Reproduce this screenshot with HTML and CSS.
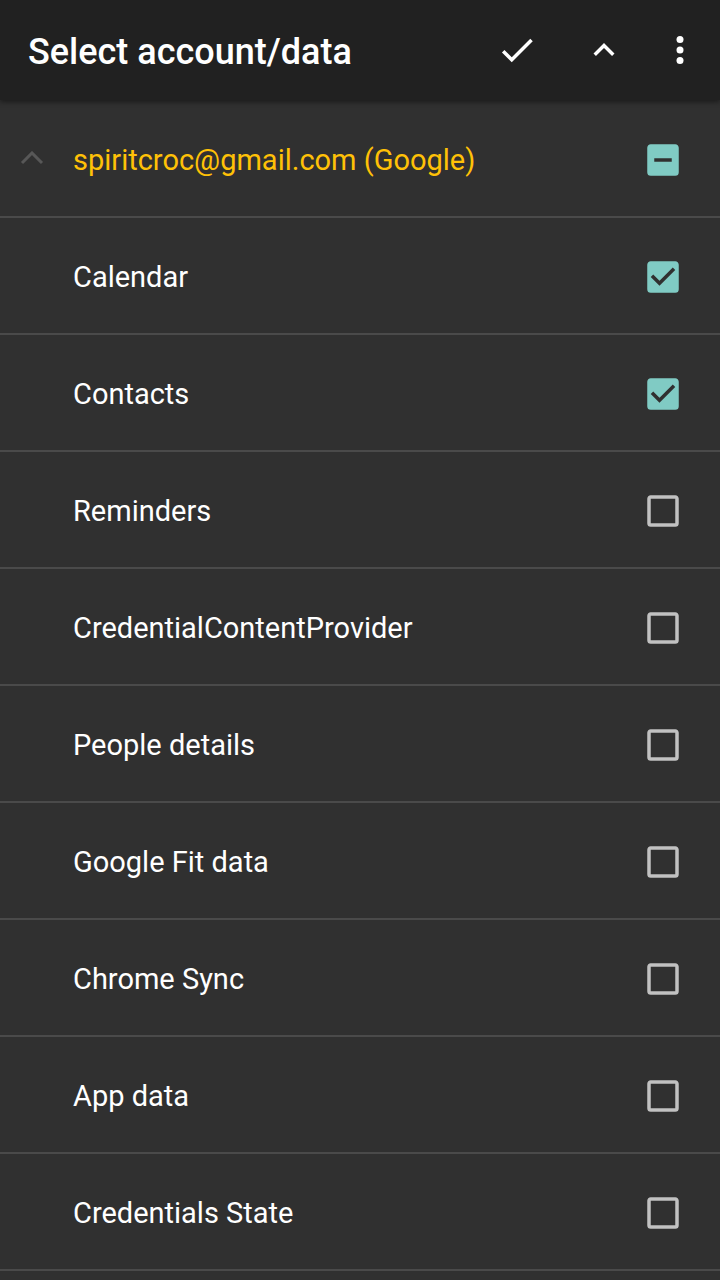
FILE: index.html
```html
<!DOCTYPE html>
<html>
<head>
<meta charset="utf-8">
<link rel="stylesheet" href="styles.css">
</head>
<body>
<header class="appbar">
  <h1 class="title">Select account/data</h1>
  <div class="actions">
    <svg class="act act-check" viewBox="0 0 24 24"><path d="M9 16.17L4.83 12l-1.42 1.41L9 19 21 7l-1.41-1.41z"/></svg>
    <svg class="act act-up" viewBox="0 0 24 24"><path d="M12 8l-6 6 1.41 1.41L12 10.83l4.59 4.58L18 14z"/></svg>
    <svg class="act act-more" viewBox="0 0 24 24"><circle cx="12" cy="6" r="2"/><circle cx="12" cy="12" r="2"/><circle cx="12" cy="18" r="2"/></svg>
  </div>
</header>
<main class="list">
  <div class="row header-row">
    <span class="lead"><svg class="chev" viewBox="0 0 24 14"><polyline points="2,12 12,2 22,12"/></svg></span>
    <span class="label account">spiritcroc@gmail.com (Google)</span>
    <svg class="cb cb-on" viewBox="0 0 24 24"><path d="M19,3H5C3.89,3 3,3.89 3,5V19A2,2 0 0,0 5,21H19A2,2 0 0,0 21,19V5C21,3.89 20.1,3 19,3M17,13H7V11H17V13Z"/></svg>
  </div>
  <div class="row"><span class="lead"></span><span class="label">Calendar</span><svg class="cb cb-on" viewBox="0 0 24 24"><path d="M19,3H5C3.89,3 3,3.9 3,5V19A2,2 0 0,0 5,21H19A2,2 0 0,0 21,19V5C21,3.89 20.1,3 19,3M10,17L5,12L6.41,10.58L10,14.17L17.59,6.58L19,8L10,17Z"/></svg></div>
  <div class="row"><span class="lead"></span><span class="label">Contacts</span><svg class="cb cb-on" viewBox="0 0 24 24"><path d="M19,3H5C3.89,3 3,3.9 3,5V19A2,2 0 0,0 5,21H19A2,2 0 0,0 21,19V5C21,3.89 20.1,3 19,3M10,17L5,12L6.41,10.58L10,14.17L17.59,6.58L19,8L10,17Z"/></svg></div>
  <div class="row"><span class="lead"></span><span class="label">Reminders</span><svg class="cb cb-off" viewBox="0 0 24 24"><path d="M19,3H5C3.89,3 3,3.89 3,5V19A2,2 0 0,0 5,21H19A2,2 0 0,0 21,19V5C21,3.89 20.1,3 19,3M19,5V19H5V5H19Z"/></svg></div>
  <div class="row"><span class="lead"></span><span class="label">CredentialContentProvider</span><svg class="cb cb-off" viewBox="0 0 24 24"><path d="M19,3H5C3.89,3 3,3.89 3,5V19A2,2 0 0,0 5,21H19A2,2 0 0,0 21,19V5C21,3.89 20.1,3 19,3M19,5V19H5V5H19Z"/></svg></div>
  <div class="row"><span class="lead"></span><span class="label">People details</span><svg class="cb cb-off" viewBox="0 0 24 24"><path d="M19,3H5C3.89,3 3,3.89 3,5V19A2,2 0 0,0 5,21H19A2,2 0 0,0 21,19V5C21,3.89 20.1,3 19,3M19,5V19H5V5H19Z"/></svg></div>
  <div class="row"><span class="lead"></span><span class="label">Google Fit data</span><svg class="cb cb-off" viewBox="0 0 24 24"><path d="M19,3H5C3.89,3 3,3.89 3,5V19A2,2 0 0,0 5,21H19A2,2 0 0,0 21,19V5C21,3.89 20.1,3 19,3M19,5V19H5V5H19Z"/></svg></div>
  <div class="row"><span class="lead"></span><span class="label">Chrome Sync</span><svg class="cb cb-off" viewBox="0 0 24 24"><path d="M19,3H5C3.89,3 3,3.89 3,5V19A2,2 0 0,0 5,21H19A2,2 0 0,0 21,19V5C21,3.89 20.1,3 19,3M19,5V19H5V5H19Z"/></svg></div>
  <div class="row"><span class="lead"></span><span class="label">App data</span><svg class="cb cb-off" viewBox="0 0 24 24"><path d="M19,3H5C3.89,3 3,3.89 3,5V19A2,2 0 0,0 5,21H19A2,2 0 0,0 21,19V5C21,3.89 20.1,3 19,3M19,5V19H5V5H19Z"/></svg></div>
  <div class="row"><span class="lead"></span><span class="label">Credentials State</span><svg class="cb cb-off" viewBox="0 0 24 24"><path d="M19,3H5C3.89,3 3,3.89 3,5V19A2,2 0 0,0 5,21H19A2,2 0 0,0 21,19V5C21,3.89 20.1,3 19,3M19,5V19H5V5H19Z"/></svg></div>
</main>
</body>
</html>
```
FILE: styles.css
```css
html, body {
  margin: 0;
  padding: 0;
  background: #303030;
  height: 1280px;
  overflow: hidden;
}
body {
  font-family: Roboto, "Noto Sans", sans-serif;
  color: #ffffff;
}
.appbar {
  position: relative;
  z-index: 2;
  height: 100px;
  background: #212121;
  display: flex;
  align-items: center;
  padding-left: 28px;
  box-shadow: 0 2px 5px rgba(0, 0, 0, 0.45);
}
.title {
  margin: 0;
  flex: 1;
  font-size: 36px;
  font-weight: 500;
  color: #ffffff;
  padding-top: 3px;
}
.actions {
  display: flex;
  align-items: center;
  height: 100%;
}
.act {
  width: 42px;
  height: 42px;
  fill: #ffffff;
}
.act-check { margin-right: 45px; }
.act-up { margin-right: 34px; }
.act-more { margin-right: 19px; }
.list {
  display: flex;
  flex-direction: column;
}
.row {
  display: flex;
  align-items: center;
  height: 115px;
  border-bottom: 2px solid #4a4a4a;
  flex-shrink: 0;
}
.header-row {
  height: 116px;
}
.lead {
  width: 73px;
  flex-shrink: 0;
  display: flex;
  align-items: center;
  padding-left: 20px;
  box-sizing: border-box;
}
.chev {
  width: 24px;
  height: 14px;
  fill: none;
  stroke: #575757;
  stroke-width: 3;
}
.label {
  flex: 1;
  font-size: 29px;
  color: #ffffff;
  padding-top: 3px;
}
.account {
  color: #ffc107;
}
.cb {
  width: 42px;
  height: 42px;
  margin-right: 36px;
  margin-top: 3px;
  flex-shrink: 0;
}
.cb-on { fill: #80cbc4; }
.cb-off { fill: rgba(255, 255, 255, 0.7); }
```
